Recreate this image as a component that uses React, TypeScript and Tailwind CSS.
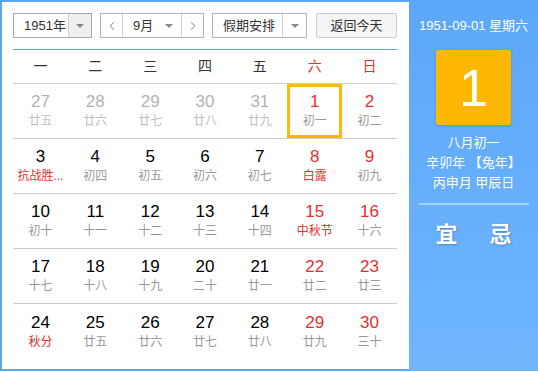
import React from 'react';
import { ChevronLeft, ChevronRight } from 'lucide-react';

type Day = { d: number; l: string; other?: boolean; fest?: boolean; sel?: boolean };

const weeks: Day[][] = [
  [
    { d: 27, l: '廿五', other: true },
    { d: 28, l: '廿六', other: true },
    { d: 29, l: '廿七', other: true },
    { d: 30, l: '廿八', other: true },
    { d: 31, l: '廿九', other: true },
    { d: 1, l: '初一', sel: true },
    { d: 2, l: '初二' },
  ],
  [
    { d: 3, l: '抗战胜...', fest: true },
    { d: 4, l: '初四' },
    { d: 5, l: '初五' },
    { d: 6, l: '初六' },
    { d: 7, l: '初七' },
    { d: 8, l: '白露', fest: true },
    { d: 9, l: '初九' },
  ],
  [
    { d: 10, l: '初十' },
    { d: 11, l: '十一' },
    { d: 12, l: '十二' },
    { d: 13, l: '十三' },
    { d: 14, l: '十四' },
    { d: 15, l: '中秋节', fest: true },
    { d: 16, l: '十六' },
  ],
  [
    { d: 17, l: '十七' },
    { d: 18, l: '十八' },
    { d: 19, l: '十九' },
    { d: 20, l: '二十' },
    { d: 21, l: '廿一' },
    { d: 22, l: '廿二' },
    { d: 23, l: '廿三' },
  ],
  [
    { d: 24, l: '秋分', fest: true },
    { d: 25, l: '廿五' },
    { d: 26, l: '廿六' },
    { d: 27, l: '廿七' },
    { d: 28, l: '廿八' },
    { d: 29, l: '廿九' },
    { d: 30, l: '三十' },
  ],
];

const weekdays = ['一', '二', '三', '四', '五', '六', '日'];

const Caret = () => (
  <span className="block w-0 h-0 border-l-[4px] border-r-[4px] border-t-[4px] border-l-transparent border-r-transparent border-t-[#888]" />
);

const App = () => {
  return (
    <div
      className="w-[538px] h-[371px] flex bg-[#5aa7f6] text-[#333]"
      style={{ fontFamily: '"Liberation Sans", "Noto Sans CJK SC", sans-serif' }}
    >
      {/* Left: calendar */}
      <div className="w-[407px] h-[367px] mt-[2px] ml-[2px] bg-white pl-[11px] pt-[11px]">
        {/* Toolbar */}
        <div className="flex items-center h-[25px] text-[13px]">
          <div className="flex h-[25px] w-[79px] border border-[#a9a9a9]">
            <span className="flex-1 flex items-center pl-[10px]">1951年</span>
            <span className="w-[23px] flex items-center justify-center bg-[#efefef] border-l border-[#d6d6d6]">
              <Caret />
            </span>
          </div>
          <div className="flex h-[25px] w-[104px] ml-[8px] border border-[#b5b5b5]">
            <span className="w-[22px] flex items-center justify-center border-r border-[#d0d0d0] text-[#666]">
              <ChevronLeft size={14} strokeWidth={1.4} />
            </span>
            <span className="flex-1 flex items-center justify-between pl-[10px] pr-[8px]">
              <span>9月</span>
              <Caret />
            </span>
            <span className="w-[22px] flex items-center justify-center border-l border-[#d0d0d0] text-[#666]">
              <ChevronRight size={14} strokeWidth={1.4} />
            </span>
          </div>
          <div className="flex h-[25px] w-[95px] ml-[8px] border border-[#b5b5b5]">
            <span className="flex-1 flex items-center pl-[10px]">假期安排</span>
            <span className="w-[24px] flex items-center justify-center border-l border-[#d0d0d0]">
              <Caret />
            </span>
          </div>
          <button className="h-[25px] w-[81px] ml-[9px] border border-[#cfcfcf] rounded-[2px] bg-[#f5f5f5] text-[13px] text-[#333]">
            返回今天
          </button>
        </div>

        {/* Calendar grid */}
        <div className="w-[384px] mt-[11px] border-t border-[#5aa7f6]">
          <div className="grid grid-cols-7 h-[34px] border-b border-[#cccccc] text-[14px]">
            {weekdays.map((w, i) => (
              <div
                key={w}
                className={`flex items-center justify-center ${i >= 5 ? 'text-[#e5302f]' : 'text-[#333]'}`}
              >
                {w}
              </div>
            ))}
          </div>
          {weeks.map((wk, r) => (
            <div
              key={r}
              className={`grid grid-cols-7 h-[55px] ${r < weeks.length - 1 ? 'border-b border-[#cccccc]' : ''}`}
            >
              {wk.map((day, i) => {
                const weekend = i >= 5;
                const numColor = day.other ? 'text-[#b3b3b3]' : weekend ? 'text-[#e5302f]' : 'text-black';
                const lunarColor = day.fest ? 'text-[#e5302f]' : day.other ? 'text-[#c0c0c0]' : 'text-[#999]';
                return (
                  <div
                    key={i}
                    className={`flex flex-col items-center justify-center ${day.sel ? 'border-[3px] border-[#ffb80f]' : ''}`}
                  >
                    <span className={`text-[17px] leading-[20px] ${numColor}`}>{day.d}</span>
                    <span className={`text-[12px] leading-[17px] mt-[1px] ${lunarColor}`}>{day.l}</span>
                  </div>
                );
              })}
            </div>
          ))}
        </div>
      </div>

      {/* Right: detail panel */}
      <div className="flex-1 h-[372px] bg-gradient-to-b from-[#5ca7f7] to-[#70b6ff] flex flex-col items-center text-white">
        <div className="mt-[18px] text-[13px] leading-[16px]">1951-09-01 星期六</div>
        <div className="mt-[16px] w-[75px] h-[75px] rounded-[3px] bg-[#ffb800] shadow-[0_1px_3px_rgba(0,0,0,0.15)] flex items-center justify-center text-[52px] leading-none">
          1
        </div>
        <div className="mt-[8px] text-[13px] leading-[20px] text-center">
          <div>八月初一</div>
          <div>辛卯年 【兔年】</div>
          <div>丙申月 甲辰日</div>
        </div>
        <div className="mt-[10px] w-[110px] h-[2px] bg-white/40" />
        <div className="mt-[17px] w-[110px] flex justify-between px-[17px] text-[22px] leading-[26px] font-bold [text-shadow:1px_1px_2px_rgba(0,0,0,0.25)]">
          <span>宜</span>
          <span>忌</span>
        </div>
      </div>
    </div>
  );
};

export default App;
